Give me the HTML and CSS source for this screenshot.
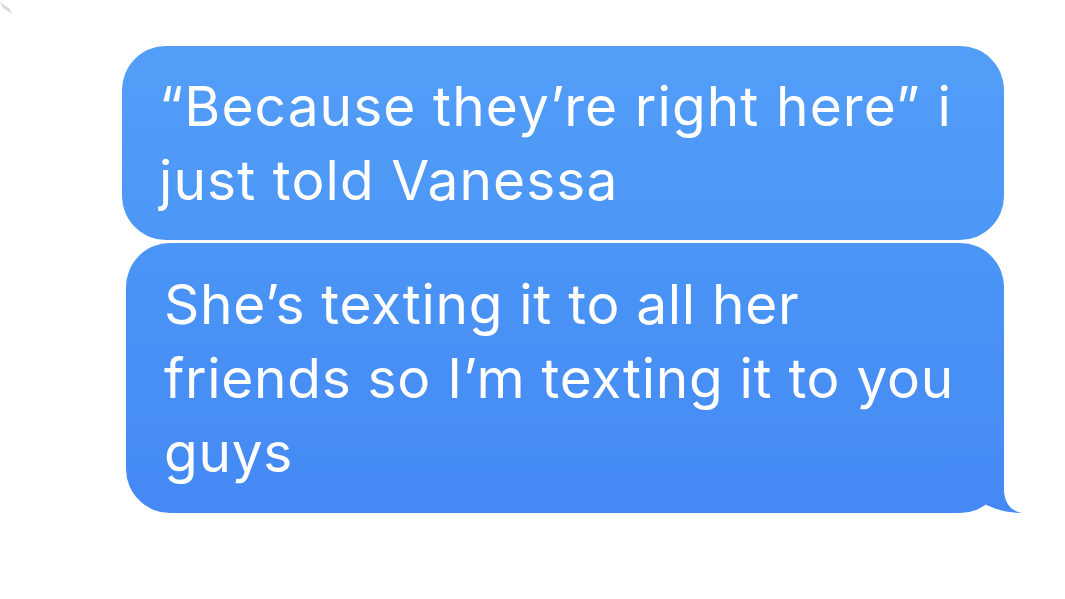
FILE: index.html
```html
<!DOCTYPE html>
<html lang="en">
<head>
  <meta charset="UTF-8" />
  <meta name="viewport" content="width=device-width, initial-scale=1.0"/>
  <title>Messages</title>
  <link rel="stylesheet" href="styles.css">
</head>
<body>
  <div class="top">
    <svg class="back" width="14" height="16" viewBox="0 0 14 16">
      <path d="M0 2 L10 9 L12 14 L3 8 Z" fill="#dcdcdc"/>
    </svg>
  </div>

  <div class="thread">
    <div class="bubble first">“Because they’re right here” i just told Vanessa</div>
    <div class="bubble last">
      She’s texting it to all her friends so I’m texting it to you guys
      <svg class="tail" width="82" height="50" viewBox="0 0 82 50">
        <path d="M0 50 L0 0 L64 0 L64 26 C64 40 71 48 82 50 C70 50 55 47 43 40 C35 47 22 50 10 50 Z" fill="#4489f4"/>
      </svg>
    </div>
  </div>
</body>
</html>
```

FILE: styles.css
```css
body {
  font-family: Inter, 'Noto Sans', sans-serif;
  margin: 0;
  padding: 0;
  background-color: #fff;
}

.top {
  height: 46px;
}

.back {
  display: block;
}

.thread {
  width: 882px;
  margin-left: 122px;
  display: flex;
  flex-direction: column;
  align-items: flex-end;
  gap: 3px;
}

.bubble {
  position: relative;
  box-sizing: border-box;
  color: #fff;
  font-size: 55px;
  line-height: 74px;
  letter-spacing: 1.1px;
  border-radius: 44px;
  padding: 23px 36px 23px 37px;
}

.first {
  width: 882px;
  background: linear-gradient(#539ef8, #4c96f6);
}

.last {
  width: 878px;
  background: linear-gradient(#4b95f6, #4489f4);
  letter-spacing: 0.7px;
  padding-top: 24px;
  padding-bottom: 24px;
  padding-left: 38px;
}

.tail {
  position: absolute;
  right: -18px;
  bottom: 0;
}
```
